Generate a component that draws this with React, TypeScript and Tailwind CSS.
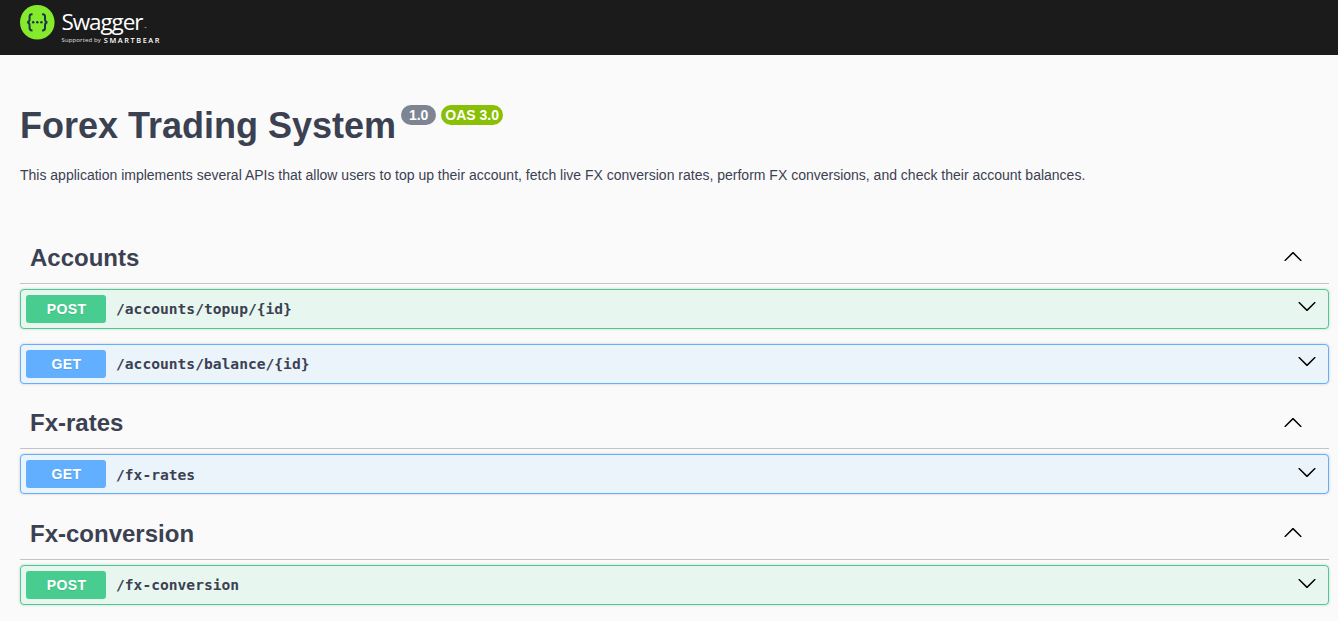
import React from "react";

type Method = "POST" | "GET";

interface Operation {
  method: Method;
  path: string;
  pathClass: string;
  arrowClass: string;
}

interface Section {
  name: string;
  heading: string;
  titleClass: string;
  operations: Operation[];
}

const sections: Section[] = [
  {
    name: "Accounts",
    heading: "h-[51px] pb-[2px]",
    titleClass: "pt-[2px]",
    operations: [
      { method: "POST", path: "/accounts/topup/{id}", pathClass: "", arrowClass: "mb-[7px]" },
      { method: "GET", path: "/accounts/balance/{id}", pathClass: "", arrowClass: "mb-[7px]" },
    ],
  },
  {
    name: "Fx-rates",
    heading: "h-[50px] pb-[2px]",
    titleClass: "",
    operations: [{ method: "GET", path: "/fx-rates", pathClass: "pt-[2px]", arrowClass: "mb-[5px]" }],
  },
  {
    name: "Fx-conversion",
    heading: "h-[51px] pb-[2px]",
    titleClass: "pt-[2px]",
    operations: [{ method: "POST", path: "/fx-conversion", pathClass: "", arrowClass: "mb-[5px]" }],
  },
];

const blockStyles: Record<Method, string> = {
  POST: "border-[#49cc90] bg-[#e8f6f0]",
  GET: "border-[#61affe] bg-[#ebf3fb]",
};

const badgeStyles: Record<Method, string> = {
  POST: "bg-[#49cc90] tracking-[0.4px]",
  GET: "bg-[#61affe] tracking-[0.4px]",
};

function Arrow({ up = false }: { up?: boolean }) {
  return (
    <svg width="20" height="20" viewBox="0 0 20 20" className={up ? "rotate-180" : ""}>
      <path
        d="M17.418 6.109c.272-.268.709-.268.979 0s.271.701 0 .969l-7.908 7.83c-.27.268-.707.268-.979 0l-7.908-7.83c-.27-.268-.27-.701 0-.969s.709-.268.979 0L10 13.25z"
        fill="#000"
      />
    </svg>
  );
}

function Logo() {
  return (
    <div className="flex items-start">
      <svg width="35" height="35" viewBox="0 0 35 35" className="mt-[5px]">
        <circle cx="17.3" cy="17.3" r="17.3" fill="#85ea2d" />
        <g fill="none" stroke="#173647" strokeWidth="2">
          <path d="M12.5 9.2H12c-1.7 0-2.4.8-2.4 2.4v2.6c0 1.8-.7 2.8-2.3 3.1 1.6.3 2.3 1.3 2.3 3.1v2.6c0 1.6.7 2.4 2.4 2.4h.5" />
          <path d="M22.1 9.2h.5c1.7 0 2.4.8 2.4 2.4v2.6c0 1.8.7 2.8 2.3 3.1-1.6.3-2.3 1.3-2.3 3.1v2.6c0 1.6-.7 2.4-2.4 2.4h-.5" />
        </g>
        <g fill="#173647">
          <circle cx="13.2" cy="17.3" r="1.25" />
          <circle cx="17.3" cy="17.3" r="1.25" />
          <circle cx="21.4" cy="17.3" r="1.25" />
        </g>
      </svg>
      <div className="ml-[6px] flex flex-col text-white">
        <div className="mt-[7px] flex h-[29px] items-start font-['Open_Sans',sans-serif]">
          <span className="ml-[0.5px] text-[22.5px] leading-[29px] tracking-[-1.1px]">Swagger</span>
          <span className="ml-[2px] mt-[19px] text-[3px] leading-[4px]">™</span>
        </div>
        <div className="flex items-center gap-[3px] font-['Open_Sans',sans-serif] leading-[9px]">
          <span className="ml-[0.5px] text-[6px] tracking-[0.13px] text-[#e0e0e0]">Supported by</span>
          <span className="text-[7.4px] font-semibold tracking-[1.55px]">SMARTBEAR</span>
        </div>
      </div>
    </div>
  );
}

function OperationRow({ method, path, pathClass, arrowClass }: Operation) {
  return (
    <div
      className={`mb-[15px] flex h-10 items-center rounded-[4px] border pl-[5px] pr-[11px] shadow-[0_0_3px_rgba(0,0,0,0.19)] ${blockStyles[method]}`}
    >
      <span
        className={`flex h-7 w-20 items-center justify-center rounded-[3px] pl-px text-[14px] font-bold text-white [text-shadow:0_1px_0_rgba(0,0,0,0.1)] ${badgeStyles[method]}`}
      >
        {method}
      </span>
      <span
        className={`ml-[10px] flex-1 font-['DejaVu_Sans_Mono',monospace] text-[14.62px] font-bold ${pathClass}`}
      >
        {path}
      </span>
      <span className={arrowClass}>
        <Arrow />
      </span>
    </div>
  );
}

export default function App() {
  return (
    <div className="min-h-[621px] bg-[#fafafa] font-['Liberation_Sans',Arial,sans-serif] text-[#3b4151]">
      <header className="h-[55px] bg-[#1b1b1b] pl-5">
        <Logo />
      </header>
      <main className="pl-5 pr-[9px]">
        <div className="flex h-[178px] flex-col pt-[50px]">
          <div className="flex items-start">
            <h1 className="text-[36px] font-bold leading-[41px]">Forex Trading System</h1>
            <span className="ml-[5px] flex h-5 w-[35px] items-center justify-center rounded-full bg-[#7d8492] text-[14px] font-bold text-white">
              1.0
            </span>
            <span className="ml-[5px] flex h-5 w-[62px] items-center justify-center rounded-full bg-[#89bf04] text-[14px] font-bold text-white">
              OAS 3.0
            </span>
          </div>
          <p className="mt-[21px] text-[14px] leading-4">
            This application implements several APIs that allow users to top up their account, fetch live FX
            conversion rates, perform FX conversions, and check their account balances.
          </p>
        </div>
        {sections.map((section) => (
          <section key={section.name}>
            <div
              className={`mb-[5px] flex items-center justify-between border-b border-[#c2c4c8] pl-[10px] pr-[26px] ${section.heading}`}
            >
              <h2 className={`text-[24px] font-bold leading-7 ${section.titleClass}`}>{section.name}</h2>
              <Arrow up />
            </div>
            {section.operations.map((op) => (
              <OperationRow key={op.path} {...op} />
            ))}
          </section>
        ))}
      </main>
    </div>
  );
}
